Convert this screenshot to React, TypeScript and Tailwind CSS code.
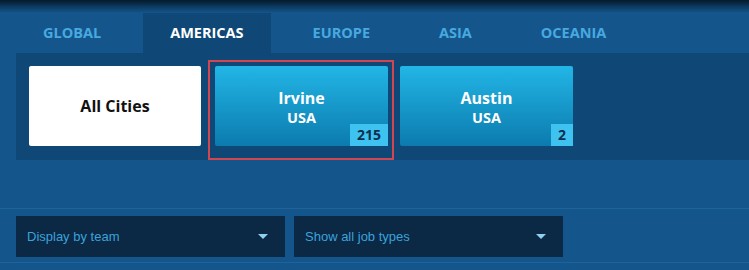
import React from "react";

const tabs = ["GLOBAL", "AMERICAS", "EUROPE", "ASIA", "OCEANIA"];

function CityCard({ city, country, count, selected }: { city: string; country: string; count: string; selected?: boolean }) {
  return (
    <div className="relative w-[173px] h-[80px]">
      {selected && (
        <div className="absolute left-[-7px] right-[-6px] top-[-6px] bottom-[-14px] border-2 border-[#d2474f] pointer-events-none" />
      )}
      <div className="relative w-full h-full rounded-[2px] bg-gradient-to-b from-[#22b6e6] to-[#0c7bae] flex flex-col items-center justify-center text-white font-bold pt-[3px]">
        <div className="text-[16px] leading-[19px]">{city}</div>
        <div className="text-[14.5px] leading-[19px]">{country}</div>
        <div className="absolute right-0 bottom-0 h-[22px] min-w-[20px] px-[7px] bg-[#3ec3f0] text-[#0f2f4f] text-[14px] leading-[22px] font-bold flex items-center justify-center">
          {count}
        </div>
      </div>
    </div>
  );
}

function Dropdown({ label }: { label: string }) {
  return (
    <div className="w-[269px] h-[41px] bg-[#0b2845] flex items-center justify-between pl-[11px] pr-[17px]" style={{ fontFamily: '"Liberation Sans", Arial, sans-serif' }}>
      <span className="text-[13px] text-[#3ba3da]">{label}</span>
      <svg width="10" height="5" viewBox="0 0 10 5">
        <polygon points="0,0 10,0 5,5" fill="#8fd0f2" />
      </svg>
    </div>
  );
}

export default function App() {
  return (
    <div
      className="w-[749px] h-[270px] bg-[#14568b] overflow-hidden"
      style={{ fontFamily: '"Open Sans", "Noto Sans", sans-serif' }}
    >
      <div className="h-[13px] bg-gradient-to-b from-[#05192b] via-[#0c3a60] to-[#14568b]" />
      <div className="flex ml-[16px] gap-[15px] h-[40px]">
        {tabs.map((t) => (
          <div
            key={t}
            className={
              t === "AMERICAS"
                ? "px-[27px] h-full flex items-center text-[14.5px] font-bold text-white bg-[#0f4877]"
                : "px-[27px] h-full flex items-center text-[14.5px] font-bold text-[#47a9e0]"
            }
          >
            {t}
          </div>
        ))}
      </div>
      <div className="ml-[16px] h-[107px] bg-[#0f4877] px-[13px] pt-[13px] flex">
        <div className="w-[172px] h-[80px] bg-white rounded-[2px] flex items-center justify-center text-[16px] font-bold text-[#111]">
          All Cities
        </div>
        <div className="ml-[14px]">
          <CityCard city="Irvine" country="USA" count="215" selected />
        </div>
        <div className="ml-[12px]">
          <CityCard city="Austin" country="USA" count="2" />
        </div>
      </div>
      <div className="mt-[48px] border-t border-[#1d649b] pt-[7px]">
        <div className="flex ml-[16px] gap-[9px]">
          <Dropdown label="Display by team" />
          <Dropdown label="Show all job types" />
        </div>
        <div className="mt-[5px] border-t border-[#1d649b]" />
      </div>
    </div>
  );
}
